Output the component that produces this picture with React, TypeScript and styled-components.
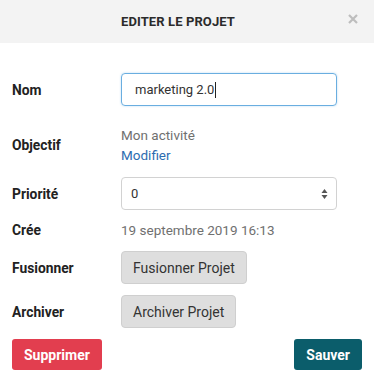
import styled, { createGlobalStyle } from "styled-components";

const GlobalStyle = createGlobalStyle`
  body {
    margin: 0;
    background: #ffffff;
    font-family: Roboto, "Liberation Sans", sans-serif;
    color: #222;
  }
`;

const Modal = styled.div`
  width: 374px;
  height: 390px;
  background: #fff;
  display: flex;
  flex-direction: column;
`;

const Header = styled.div`
  height: 43px;
  background: #f3f3f3;
  display: flex;
  align-items: center;
  justify-content: center;
  padding-right: 18px;
  position: relative;
`;

const Title = styled.div`
  font-weight: 700;
  font-size: 13px;
  letter-spacing: 0.1px;
  color: #2b2b2b;
`;

const Close = styled.button`
  position: absolute;
  right: 15px;
  top: 13px;
  width: 12px;
  height: 12px;
  padding: 0;
  border: none;
  background: none;
  display: flex;
`;

const Body = styled.div`
  padding: 30px 12px 0 12px;
  display: flex;
  flex-direction: column;
`;

type RowProps = { $top?: number; $height?: number };

const Row = styled.div<RowProps>`
  display: flex;
  align-items: center;
  margin-top: ${(p) => p.$top ?? 11}px;
  min-height: ${(p) => p.$height ?? 33}px;
`;

const Label = styled.div`
  width: 109px;
  flex-shrink: 0;
  font-weight: 700;
  font-size: 13.8px;
  color: #222;
`;

const Field = styled.div`
  width: 216px;
  height: 33px;
  box-sizing: border-box;
  border-radius: 4px;
  display: flex;
  align-items: center;
  font-size: 13px;
  color: #333;
`;

const TextField = styled(Field)`
  border: 1px solid #6aaee0;
  box-shadow: 0 0 2px rgba(102, 175, 233, 0.5);
  padding-left: 13px;
`;

const Caret = styled.span`
  display: inline-block;
  width: 1px;
  height: 16px;
  background: #222;
  margin-left: 1px;
`;

const SelectField = styled(Field)`
  border: 1px solid #d2d2d2;
  padding: 0 8px 0 9px;
  justify-content: space-between;
`;

const Stack = styled.div`
  display: flex;
  flex-direction: column;
  font-size: 13.5px;
  line-height: 20px;
`;

const Muted = styled.div`
  color: #707070;
  font-size: 13.5px;
`;

const Link = styled.a`
  color: #2d6cb0;
  text-decoration: none;
`;

const GreyButton = styled.button`
  height: 33px;
  padding: 0 11px;
  border: 1px solid #cfcfcf;
  border-radius: 4px;
  background: #dedede;
  font-family: inherit;
  font-size: 14px;
  color: #333;
`;

const Footer = styled.div`
  display: flex;
  justify-content: space-between;
  margin-top: 11px;
  padding: 0 12px;
`;

type ActionProps = { $color: string };

const Action = styled.button<ActionProps>`
  height: 31px;
  padding: 0 12px;
  border: none;
  border-radius: 3px;
  background: ${(p) => p.$color};
  color: #fff;
  font-family: inherit;
  font-weight: 700;
  font-size: 14px;
`;

export default function App() {
  return (
    <>
      <GlobalStyle />
      <Modal>
        <Header>
          <Title>EDITER LE PROJET</Title>
          <Close>
            <svg width="12" height="12" viewBox="0 0 12 12">
              <path d="M2 2L10 10M10 2L2 10" stroke="#bdbdbd" strokeWidth="2.2" />
            </svg>
          </Close>
        </Header>
        <Body>
          <Row $top={0}>
            <Label>Nom</Label>
            <TextField>
              marketing 2.0
              <Caret />
            </TextField>
          </Row>
          <Row $top={19} $height={40}>
            <Label>Objectif</Label>
            <Stack>
              <Muted>Mon activité</Muted>
              <Link href="#">Modifier</Link>
            </Stack>
          </Row>
          <Row $top={12}>
            <Label>Priorité</Label>
            <SelectField>
              <span>0</span>
              <svg width="7" height="12" viewBox="0 0 7 12">
                <path d="M3.5 1L6.5 5H0.5Z M3.5 11L6.5 7H0.5Z" fill="#555" />
              </svg>
            </SelectField>
          </Row>
          <Row $top={10} $height={20}>
            <Label>Crée</Label>
            <Muted>19 septembre 2019 16:13</Muted>
          </Row>
          <Row>
            <Label>Fusionner</Label>
            <GreyButton>Fusionner Projet</GreyButton>
          </Row>
          <Row>
            <Label>Archiver</Label>
            <GreyButton>Archiver Projet</GreyButton>
          </Row>
        </Body>
        <Footer>
          <Action $color="#e23e4f">Supprimer</Action>
          <Action $color="#0b5d6b">Sauver</Action>
        </Footer>
      </Modal>
    </>
  );
}
